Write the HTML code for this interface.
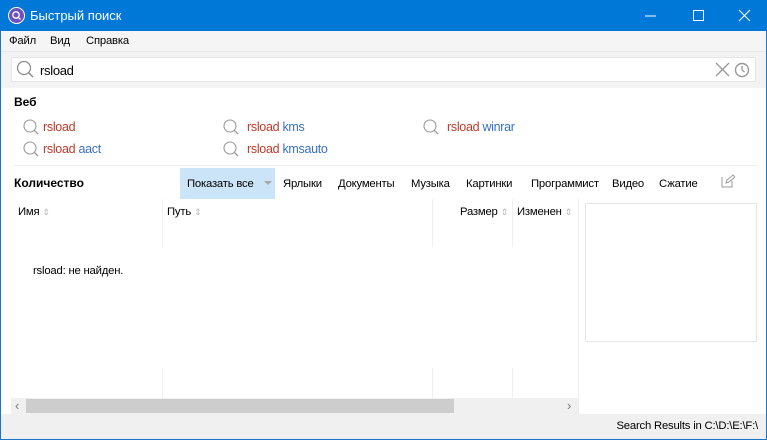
<!DOCTYPE html><html><head><meta charset="utf-8"><style>
*{margin:0;padding:0;box-sizing:border-box}
body{width:767px;height:440px;overflow:hidden;font-family:"Liberation Sans","DejaVu Sans",sans-serif;font-size:12px;color:#000;background:#fff;position:relative}
.a{position:absolute;white-space:nowrap}
.t{font-size:11.3px;letter-spacing:-0.2px}
.r{color:#c0392b}.b{color:#3a6fc4}
svg{position:absolute}
</style></head><body>
<div class="a" style="left:0;top:0;width:767px;height:440px;border:1px solid #1c76c8"></div>
<div class="a" style="left:0;top:0;width:767px;height:31px;background:#0078d7"></div>
<svg style="left:8px;top:7px" width="17" height="17"><circle cx="8.5" cy="8.5" r="8" fill="#6c4fc2" stroke="#fff" stroke-width="1"/><circle cx="8" cy="8" r="3.2" fill="none" stroke="#fff" stroke-width="1.3"/><line x1="10.3" y1="10.3" x2="12.5" y2="12.5" stroke="#fff" stroke-width="1.3"/></svg>
<div class="a" style="left:30px;top:8px;color:#fff;font-size:13px">Быстрый поиск</div>
<svg style="left:645px;top:8px" width="115" height="16"><line x1="0" y1="8" x2="11" y2="8" stroke="#fff"/><rect x="48.5" y="2.5" width="10" height="10" fill="none" stroke="#fff"/><path d="M94 2L105 13M105 2L94 13" stroke="#fff" stroke-width="1.1"/></svg>
<div class="a" style="left:1px;top:31px;width:765px;height:20px;background:#f5f5f5"></div>
<div class="a t" style="left:9px;top:35px">Файл</div><div class="a t" style="left:50px;top:35px">Вид</div><div class="a t" style="left:86px;top:35px">Справка</div>
<div class="a" style="left:1px;top:51px;width:765px;height:37px;background:#f3f3f3;border-top:1px solid #e8e8e8"></div>
<div class="a" style="left:11px;top:57px;width:745px;height:25px;background:#fff;border:1px solid #e6e6e6"></div>
<svg style="left:16px;top:60px" width="20" height="20"><circle cx="8" cy="8" r="6.5" fill="none" stroke="#888" stroke-width="1.2"/><line x1="12.6" y1="12.6" x2="17" y2="17" stroke="#888" stroke-width="1.4"/></svg>
<div class="a" style="left:40px;top:63px;font-size:13px;letter-spacing:-0.3px">rsload</div>
<svg style="left:714px;top:60px" width="40" height="20"><path d="M2 3L15 16M15 3L2 16" stroke="#999" stroke-width="1.4"/><circle cx="28" cy="10" r="6.5" fill="none" stroke="#999" stroke-width="1.4"/><path d="M28 6v4l2.5 2" stroke="#999" stroke-width="1.3" fill="none"/></svg>
<div class="a" style="left:14px;top:95px;font-weight:bold">Веб</div>
<svg style="left:22px;top:118px" width="20" height="20"><circle cx="8" cy="8" r="6" fill="none" stroke="#999" stroke-width="1.1"/><line x1="12.3" y1="12.3" x2="16" y2="16" stroke="#999" stroke-width="1.3"/></svg>
<svg style="left:22px;top:140px" width="20" height="20"><circle cx="8" cy="8" r="6" fill="none" stroke="#999" stroke-width="1.1"/><line x1="12.3" y1="12.3" x2="16" y2="16" stroke="#999" stroke-width="1.3"/></svg>
<svg style="left:222px;top:118px" width="20" height="20"><circle cx="8" cy="8" r="6" fill="none" stroke="#999" stroke-width="1.1"/><line x1="12.3" y1="12.3" x2="16" y2="16" stroke="#999" stroke-width="1.3"/></svg>
<svg style="left:222px;top:140px" width="20" height="20"><circle cx="8" cy="8" r="6" fill="none" stroke="#999" stroke-width="1.1"/><line x1="12.3" y1="12.3" x2="16" y2="16" stroke="#999" stroke-width="1.3"/></svg>
<svg style="left:422px;top:118px" width="20" height="20"><circle cx="8" cy="8" r="6" fill="none" stroke="#999" stroke-width="1.1"/><line x1="12.3" y1="12.3" x2="16" y2="16" stroke="#999" stroke-width="1.3"/></svg>
<div class="a" style="left:43px;top:120px;font-size:12.5px;letter-spacing:-0.3px"><span class="r">rsload</span></div>
<div class="a" style="left:43px;top:142px;font-size:12.5px;letter-spacing:-0.3px"><span class="r">rsload</span> <span class="b">aact</span></div>
<div class="a" style="left:247px;top:120px;font-size:12.5px;letter-spacing:-0.3px"><span class="r">rsload</span> <span class="b">kms</span></div>
<div class="a" style="left:247px;top:142px;font-size:12.5px;letter-spacing:-0.3px"><span class="r">rsload</span> <span class="b">kmsauto</span></div>
<div class="a" style="left:447px;top:120px;font-size:12.5px;letter-spacing:-0.3px"><span class="r">rsload</span> <span class="b">winrar</span></div>
<div class="a" style="left:13px;top:165px;width:745px;height:1px;background:#eee"></div>
<div class="a" style="left:14px;top:176px;font-weight:bold">Количество</div>
<div class="a" style="left:180px;top:168px;width:95px;height:31px;background:#cce4f7"></div>
<div class="a t" style="left:187px;top:178px">Показать все</div>
<svg style="left:264px;top:181px" width="8" height="5"><path d="M0 0h8L4 4z" fill="#aaa"/></svg>
<div class="a t" style="left:283px;top:178px">Ярлыки</div>
<div class="a t" style="left:338px;top:178px">Документы</div>
<div class="a t" style="left:411px;top:178px">Музыка</div>
<div class="a t" style="left:466px;top:178px">Картинки</div>
<div class="a t" style="left:531px;top:178px">Программист</div>
<div class="a t" style="left:612px;top:178px">Видео</div>
<div class="a t" style="left:659px;top:178px">Сжатие</div>
<svg style="left:721px;top:174px" width="14" height="14"><path d="M1 3v10h10V7M5 9l1-3 6-5 2 2-6 5z" fill="none" stroke="#999"/></svg>
<div class="a" style="left:162px;top:199px;width:1px;height:48px;background:#eef"></div>
<div class="a" style="left:432px;top:199px;width:1px;height:48px;background:#eef"></div>
<div class="a" style="left:512px;top:199px;width:1px;height:48px;background:#eef"></div>
<div class="a" style="left:162px;top:368px;width:1px;height:30px;background:#eef"></div>
<div class="a" style="left:432px;top:368px;width:1px;height:30px;background:#eef"></div>
<div class="a" style="left:512px;top:368px;width:1px;height:30px;background:#eef"></div>
<div class="a t" style="left:18px;top:206px">Имя <span style="color:#bbb;font-size:9px">⇕</span></div>
<div class="a t" style="left:167px;top:206px">Путь <span style="color:#bbb;font-size:9px">⇕</span></div>
<div class="a t" style="left:460px;top:206px">Размер <span style="color:#bbb;font-size:9px">⇕</span></div>
<div class="a t" style="left:517px;top:206px">Изменен <span style="color:#bbb;font-size:9px">⇕</span></div>
<div class="a t" style="left:33px;top:265px">rsload: не найден.</div>
<div class="a" style="left:578px;top:199px;width:1px;height:215px;background:#eee"></div>
<div class="a" style="left:585px;top:203px;width:172px;height:139px;border:1px solid #e6e6e6"></div>
<div class="a" style="left:11px;top:398px;width:567px;height:16px;background:#f0f0f0"></div>
<div class="a" style="left:26px;top:399px;width:428px;height:14px;background:#cdcdcd"></div>
<div class="a" style="left:15px;top:398px;color:#777;font-size:13px">‹</div>
<div class="a" style="left:567px;top:398px;color:#777;font-size:13px">›</div>
<div class="a" style="left:1px;top:414px;width:765px;height:25px;background:#f0f0f0"></div>
<div class="a t" style="right:9px;top:420px">Search Results in C:\D:\E:\F:\</div>
</body></html>
